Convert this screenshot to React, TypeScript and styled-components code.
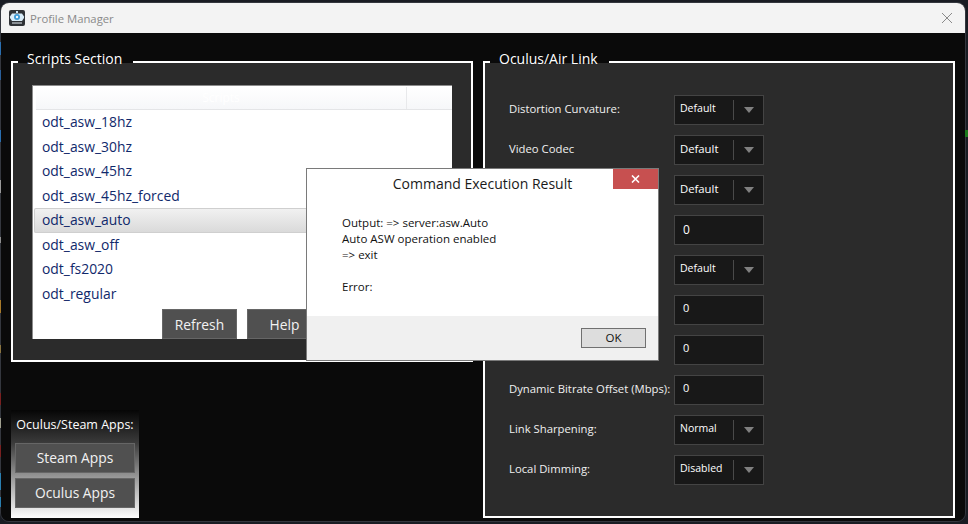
import React from 'react'
import styled, { createGlobalStyle } from 'styled-components'

const Global = createGlobalStyle`
	html, body {
		margin: 0;
		padding: 0;
		background: #191c23;
	}
	* {
		box-sizing: border-box;
	}
`

const DesktopMark = styled.div<{ $top: number; $height: number; $color: string; $right?: boolean }>`
	position: absolute;
	top: ${p => p.$top}px;
	height: ${p => p.$height}px;
	${p => (p.$right ? 'left: 965px; width: 3px;' : 'left: 0; width: 1px;')}
	background: ${p => p.$color};
	z-index: 2;
`

const Window = styled.div`
	position: relative;
	width: 964px;
	height: 518px;
	margin: 3px 0 0 1px;
	border-radius: 8px;
	overflow: hidden;
	background: #0a0a0a;
	display: flex;
	flex-direction: column;
	font-family: 'Open Sans', 'Noto Sans', sans-serif;
`

const WindowEdge = styled.div`
	border-radius: 9px;
	width: 966px;
	height: 520px;
	position: absolute;
	left: 0;
	top: 2px;
	border: 1px solid #34373e;
	pointer-events: none;
`

const TitleBar = styled.div`
	height: 30px;
	flex: none;
	background: #f3f3f3;
	display: flex;
	align-items: center;
	padding: 0 12px 0 8px;
	gap: 5px;
`

const TitleText = styled.span`
	font-size: 11.3px;
	color: #8a8a8a;
	flex: 1;
`

const CloseIcon = styled.svg`
	width: 12px;
	height: 12px;
	display: block;
`

const Body = styled.div`
	flex: 1;
	display: grid;
	grid-template-columns: 462px 472px;
	gap: 10px;
	padding: 28px 10px 3px 10px;
	min-height: 0;
`

const LeftColumn = styled.div`
	display: flex;
	flex-direction: column;
	justify-content: space-between;
`

const Panel = styled.section<{ $height?: number }>`
	position: relative;
	height: ${p => (p.$height ? `${p.$height}px` : '100%')};
	border: 2px solid #fff;
	background: #2b2b2b;
`

const Legend = styled.div`
	position: absolute;
	left: 5px;
	top: -14px;
	height: 16px;
	padding: 0 11px 0 9px;
	font-size: 14px;
	line-height: 20px;
	color: #fff;
	white-space: nowrap;
	background: linear-gradient(#0a0a0a 0 14px, #2b2b2b 14px);
`

const ScriptsBody = styled.div`
	height: 100%;
	padding: 22px 19px 21px 19px;
`

const ListBox = styled.div`
	height: 100%;
	background: #fff;
	border: 1px solid #8c8c8c;
	border-width: 1px 0 0 1px;
	padding-top: 1px;
	display: flex;
	flex-direction: column;
`

const ListHeader = styled.div`
	height: 23px;
	margin-left: 3px;
	flex: none;
	display: grid;
	grid-template-columns: 371px 1fr;
	background: linear-gradient(#ffffff, #f6f7f9);
	border-bottom: 1px solid #e4e5e7;
	font-size: 12px;
	line-height: 22px;
	color: #fff;
	text-align: center;
`

const HeaderCell = styled.div`
	border-right: 1px solid #e8e9eb;
`

const Row = styled.div<{ $selected?: boolean }>`
	height: 24.5px;
	flex: none;
	margin-left: 1px;
	padding-left: 8px;
	font-size: 13.9px;
	line-height: 24px;
	color: #10296b;
	border-radius: 2px;
	${p =>
		p.$selected &&
		`
		background: linear-gradient(#f2f2f2, #d9d9d9);
		box-shadow: inset 0 0 0 1px #cfcfcf;
	`}
`

const ListFooter = styled.div`
	margin-top: auto;
	display: flex;
	gap: 10px;
	padding-left: 129px;
`

const DarkButton = styled.div<{ $width: number; $height: number }>`
	width: ${p => p.$width}px;
	height: ${p => p.$height}px;
	background: #505050;
	border: 1px solid #666;
	color: #f2f2f2;
	font-size: 13.8px;
	display: flex;
	align-items: center;
	justify-content: center;
`

const AppsBox = styled.div`
	width: 128px;
	height: 108px;
	padding: 5px 4px 0;
	display: flex;
	flex-direction: column;
	background: linear-gradient(#060606, #3a3a3a 30%, #a0a0a0 65%, #fdfdfd);
`

const AppsLabel = styled.div`
	font-size: 12.5px;
	line-height: 20px;
	height: 28px;
	color: #fff;
	text-align: center;
	white-space: nowrap;
`

const AppsButtons = styled.div`
	display: flex;
	flex-direction: column;
	gap: 5px;
`

const AppButton = styled(DarkButton)`
	padding-bottom: 2px;
`

const Form = styled.div`
	padding: 32px 0 0 24px;
	display: flex;
	flex-direction: column;
	gap: 10px;
`

const FormRow = styled.div`
	display: grid;
	grid-template-columns: 165px 90px;
	align-items: center;
	height: 30px;
`

const FormLabel = styled.span`
	font-size: 11.3px;
	color: #f0f0f0;
	white-space: nowrap;
	padding-bottom: 4px;
`

const Control = styled.div`
	width: 90px;
	height: 30px;
	background: #181818;
	border: 1px solid #444;
	display: flex;
	align-items: center;
	color: #fff;
`

const SelectText = styled.span<{ $small?: boolean }>`
	flex: none;
	width: 58px;
	padding-left: 5px;
	font-size: ${p => (p.$small ? 10.5 : 11.3)}px;
	position: relative;
	top: -2px;
`

const Separator = styled.span`
	width: 1px;
	height: 20px;
	background: #4a4a4a;
`

const Caret = styled.span`
	margin-left: 10px;
	width: 0;
	height: 0;
	border-left: 5px solid transparent;
	border-right: 5px solid transparent;
	border-top: 6px solid #808080;
`

const InputText = styled.span<{ $small?: boolean }>`
	padding-left: 8px;
	font-size: ${p => (p.$small ? 11 : 12)}px;
	position: relative;
	top: ${p => (p.$small ? -3 : -1)}px;
`

const Dialog = styled.div`
	position: absolute;
	left: 305px;
	top: 165px;
	width: 353px;
	height: 193px;
	background: #fff;
	border: 1px solid #7a7a7a;
	display: flex;
	flex-direction: column;
`

const DialogClose = styled.div`
	position: absolute;
	right: 0;
	top: 0;
	width: 45px;
	height: 20px;
	background: #c75050;
	display: flex;
	align-items: center;
	justify-content: center;
`

const DialogTitle = styled.div`
	height: 31px;
	flex: none;
	text-align: center;
	font-size: 14px;
	line-height: 30px;
	color: #1a1a1a;
`

const DialogBody = styled.div`
	flex: 1;
	padding: 15px 0 0 35px;
	font-size: 11.5px;
	line-height: 16px;
	color: #111;
	white-space: pre;
`

const DialogFooter = styled.div`
	height: 44px;
	flex: none;
	background: #f0f0f0;
	display: flex;
	justify-content: flex-end;
	padding: 12px 12px 0 0;
`

const OkButton = styled.div`
	width: 65px;
	height: 20px;
	background: #dddddd;
	border: 1px solid #707070;
	font-size: 11.5px;
	line-height: 18px;
	text-align: center;
	color: #111;
`

const scripts = [
	'odt_asw_18hz',
	'odt_asw_30hz',
	'odt_asw_45hz',
	'odt_asw_45hz_forced',
	'odt_asw_auto',
	'odt_asw_off',
	'odt_fs2020',
	'odt_regular',
]

type Setting = {
	label: string
	kind: 'select' | 'input'
	value: string
	small?: boolean
}

const settings: Setting[] = [
	{ label: 'Distortion Curvature:', kind: 'select', value: 'Default', small: true },
	{ label: 'Video Codec', kind: 'select', value: 'Default' },
	{ label: '', kind: 'select', value: 'Default' },
	{ label: '', kind: 'input', value: '0' },
	{ label: '', kind: 'select', value: 'Default', small: true },
	{ label: '', kind: 'input', value: '0', small: true },
	{ label: '', kind: 'input', value: '0', small: true },
	{ label: 'Dynamic Bitrate Offset (Mbps):', kind: 'input', value: '0', small: true },
	{ label: 'Link Sharpening:', kind: 'select', value: 'Normal', small: true },
	{ label: 'Local Dimming:', kind: 'select', value: 'Disabled', small: true },
]

// slivers of the desktop showing past the window edge
const desktopMarks = [
	{ top: 42, height: 13, color: '#2a6fb0' },
	{ top: 70, height: 10, color: '#2a5f9a' },
	{ top: 130, height: 12, color: '#2a6fb0' },
	{ top: 180, height: 13, color: '#9a9a9a' },
	{ top: 237, height: 6, color: '#8f8f8f' },
	{ top: 300, height: 13, color: '#a87a2a' },
	{ top: 345, height: 8, color: '#8a7440' },
	{ top: 393, height: 12, color: '#7a2020' },
	{ top: 418, height: 10, color: '#a0a090' },
	{ top: 445, height: 12, color: '#7a2020' },
	{ top: 473, height: 17, color: '#2a7fb0' },
	{ top: 497, height: 10, color: '#2a7fb0' },
]

const AppIcon = () => (
	<svg width="16" height="16" viewBox="0 0 16 16">
		<rect x="0" y="0" width="16" height="16" rx="2" fill="#2f3236" />
		<rect x="7" y="1" width="2" height="2" fill="#cfe6f5" />
		<path d="M3 3.5h10l2 3v1.5l-2 3H3l-2-3V6.5z" fill="#d8ecf8" />
		<circle cx="8" cy="7" r="3" fill="#3d9ad6" />
		<circle cx="8" cy="7" r="1.2" fill="#f2faff" />
		<rect x="3" y="12" width="10" height="2" fill="#8a8f94" />
	</svg>
)

const App = () => (
	<>
		<Global />
		{desktopMarks.map(m => (
			<DesktopMark key={m.top} $top={m.top} $height={m.height} $color={m.color} />
		))}
		<DesktopMark $right $top={130} $height={7} $color="#1c7a1c" />
		<WindowEdge />
		<Window>
			<TitleBar>
				<AppIcon />
				<TitleText>Profile Manager</TitleText>
				<CloseIcon viewBox="0 0 12 12">
					<path d="M1 1L11 11M11 1L1 11" stroke="#8a8a8a" strokeWidth="1" fill="none" />
				</CloseIcon>
			</TitleBar>
			<Body>
				<LeftColumn>
					<Panel $height={301}>
						<Legend>Scripts Section</Legend>
						<ScriptsBody>
							<ListBox>
								<ListHeader>
									<HeaderCell>Scripts</HeaderCell>
									<div />
								</ListHeader>
								{scripts.map(name => (
									<Row key={name} $selected={name === 'odt_asw_auto'}>
										{name}
									</Row>
								))}
								<ListFooter>
									<DarkButton $width={75} $height={30}>Refresh</DarkButton>
									<DarkButton $width={75} $height={30}>Help</DarkButton>
								</ListFooter>
							</ListBox>
						</ScriptsBody>
					</Panel>
					<AppsBox>
						<AppsLabel>Oculus/Steam Apps:</AppsLabel>
						<AppsButtons>
							<AppButton $width={120} $height={30}>Steam Apps</AppButton>
							<AppButton $width={120} $height={30}>Oculus Apps</AppButton>
						</AppsButtons>
					</AppsBox>
				</LeftColumn>
				<Panel>
					<Legend>Oculus/Air Link</Legend>
					<Form>
						{settings.map((s, i) => (
							<FormRow key={i}>
								<FormLabel>{s.label}</FormLabel>
								<Control>
									{s.kind === 'select' ? (
										<>
											<SelectText $small={s.small}>{s.value}</SelectText>
											<Separator />
											<Caret />
										</>
									) : (
										<InputText $small={s.small}>{s.value}</InputText>
									)}
								</Control>
							</FormRow>
						))}
					</Form>
				</Panel>
			</Body>
			<Dialog>
				<DialogClose>
					<svg width="9" height="8" viewBox="0 0 9 8">
						<path d="M1 0.5L8 7.5M8 0.5L1 7.5" stroke="#fff" strokeWidth="1.6" fill="none" />
					</svg>
				</DialogClose>
				<DialogTitle>Command Execution Result</DialogTitle>
				<DialogBody>{'Output: => server:asw.Auto\nAuto ASW operation enabled\n=> exit\n\nError:'}</DialogBody>
				<DialogFooter>
					<OkButton>OK</OkButton>
				</DialogFooter>
			</Dialog>
		</Window>
	</>
)

export default App
